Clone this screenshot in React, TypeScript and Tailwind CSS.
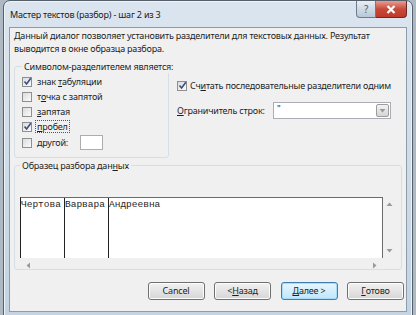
import type { ReactNode } from "react";

const ui = { fontFamily: '"Noto Sans", "Open Sans", sans-serif' };
const mono = { fontFamily: '"Liberation Mono", "DejaVu Sans Mono", monospace' };

const Check = ({ checked }: { checked?: boolean }) => (
    <span className="relative flex h-[10px] w-[10px] shrink-0 items-center justify-center border border-[#8e8f8f] bg-gradient-to-br from-[#dcdcdc] to-[#fbfbfb]">
        {checked && (
            <svg width="9" height="9" viewBox="0 0 9 9" className="absolute">
                <path d="M1.5 4.5 L3.6 7 L7.8 1.2" fill="none" stroke="#3b4f86" strokeWidth="1.6" />
            </svg>
        )}
    </span>
);

const CheckRow = ({ checked, children, focus }: { checked?: boolean; children: ReactNode; focus?: boolean }) => (
    <div className="flex h-[15px] items-center gap-[3px]">
        <Check checked={checked} />
        <span className={focus ? "border border-dotted border-[#555] px-[1px] leading-[11px]" : "px-[2px]"}>{children}</span>
    </div>
);

const Btn = ({ children, primary }: { children: ReactNode; primary?: boolean }) => (
    <div
        className={
            "flex h-[18px] w-[57px] items-center justify-center rounded-[3px] border " +
            (primary
                ? "border-[#3c7fb1] bg-gradient-to-b from-[#eaf6fd] to-[#bee6fd] shadow-[inset_0_0_0_1px_#a6dcf7]"
                : "border-[#707070] bg-gradient-to-b from-[#f2f2f2] to-[#d6d6d6] shadow-[inset_0_0_0_1px_#fcfcfc]")
        }
    >
        {children}
    </div>
);

const Arrow = ({ d }: { d: string }) => (
    <svg width="7" height="7" viewBox="0 0 7 7">
        <path d={d} fill="#9a9a9a" />
    </svg>
);

export default function App() {
    return (
        <div className="h-[315px] w-[416px] overflow-hidden whitespace-nowrap bg-[#aeb9c4] text-[9px] tracking-[-0.2px] text-[#1e1e1e]" style={ui}>
            <div className="ml-[3px] flex h-[318px] w-[410px] flex-col rounded-t-[7px] border border-[#55606b] bg-gradient-to-b from-[#dbe5ef] to-[#c3d3e3] px-[5px] pb-[5px] shadow-[inset_0_0_0_1px_#eef3f8]">
                <div className="flex h-[26px] items-start justify-between">
                    <span className="pl-[1px] pt-[7px] text-[#1b1b1b]">Мастер текстов (разбор) - шаг 2 из 3</span>
                    <div className="flex">
                        <div className="flex h-[17px] w-[20px] items-center justify-center rounded-bl-[4px] border border-t-0 border-[#6d7c8c] bg-gradient-to-b from-[#e8eef5] to-[#b9c7d6] text-[10px] text-[#4c5967]">
                            ?
                        </div>
                        <div className="flex h-[17px] w-[31px] items-center justify-center rounded-br-[4px] border border-l-0 border-t-0 border-[#6a2a24] bg-gradient-to-b from-[#e89c8f] via-[#c74a3a] to-[#c0392b]">
                            <svg width="10" height="9" viewBox="0 0 10 9">
                                <path d="M1.5 1 L8.5 8 M8.5 1 L1.5 8" stroke="#fff" strokeWidth="2.2" />
                            </svg>
                        </div>
                    </div>
                </div>
                <div className="flex flex-1 flex-col border border-[#8d9cab] bg-[#f0f0f0]">
                    <p className="pl-[4px] pt-[1px] leading-[13px]">
                        Данный диалог позволяет установить разделители для текстовых данных. Результат
                        <br />
                        выводится в окне образца разбора.
                    </p>
                    <div className="mt-[5px] flex">
                        <fieldset className="ml-[4px] h-[98px] w-[155px] min-w-0 shrink-0 rounded-[3px] border border-[#d5dfe5] pl-[7px] pt-[1px]">
                            <legend className="px-[2px] leading-[13px]">Символом-разделителем является:</legend>
                            <CheckRow checked>
                                знак <u>т</u>абуляции
                            </CheckRow>
                            <CheckRow>
                                т<u>о</u>чка с запятой
                            </CheckRow>
                            <CheckRow>
                                <u>з</u>апятая
                            </CheckRow>
                            <CheckRow checked focus>
                                <u>п</u>робел
                            </CheckRow>
                            <div className="flex h-[17px] items-center gap-[3px]">
                                <Check />
                                <span className="px-[2px]">
                                    <u>д</u>ругой:
                                </span>
                                <span className="ml-[7px] h-[15px] w-[23px] border border-[#abadb3] bg-white" />
                            </div>
                        </fieldset>
                        <div className="ml-[8px] flex flex-col pt-[19px]">
                            <div className="flex h-[13px] items-center gap-[3px]">
                                <Check checked />
                                <span>
                                    Сч<u>и</u>тать последовательные разделители одним
                                </span>
                            </div>
                            <div className="mt-[10px] flex items-center">
                                <span className="w-[96px]">
                                    <u>О</u>граничитель строк:
                                </span>
                                <div className="flex h-[17px] w-[118px] border border-[#abadb3] bg-white">
                                    <span className="flex-1 pl-[3px] leading-[11px]">"</span>
                                    <div className="m-[1px] flex w-[13px] items-center justify-center rounded-[2px] border border-[#9c9c9c] bg-gradient-to-b from-[#f3f3f3] to-[#d5d5d5]">
                                        <Arrow d="M0.5 2 L6.5 2 L3.5 5.5 Z" />
                                    </div>
                                </div>
                            </div>
                        </div>
                    </div>
                    <fieldset className="ml-[4px] mt-[1px] h-[111px] w-[388px] min-w-0 rounded-[3px] border border-[#d5dfe5] pl-[5px] pt-[25px]">
                        <legend className="px-[2px] leading-[13px]">
                            Образец разбора дан<u>н</u>ых
                        </legend>
                        <div className="flex w-[376px] flex-col">
                            <div className="flex h-[61px]">
                                <div className="flex flex-1 border-l border-r border-t border-[#6b6b6b] border-l-[#222] bg-white text-[9.5px] leading-[14px] tracking-normal" style={mono}>
                                    <span className="w-[44px] border-r border-[#222]">Чертова</span>
                                    <span className="w-[44px] border-r border-[#222]">Варвара</span>
                                    <span>Андреевна</span>
                                </div>
                                <div className="flex w-[13px] flex-col items-center justify-between py-[4px]">
                                    <Arrow d="M0.5 5 L6.5 5 L3.5 1.5 Z" />
                                    <Arrow d="M0.5 2 L6.5 2 L3.5 5.5 Z" />
                                </div>
                            </div>
                            <div className="flex h-[14px] w-[363px] items-center justify-between px-[5px]">
                                <Arrow d="M5 0.5 L5 6.5 L1.5 3.5 Z" />
                                <Arrow d="M2 0.5 L2 6.5 L5.5 3.5 Z" />
                            </div>
                        </div>
                    </fieldset>
                    <div className="mt-[12px] flex justify-end gap-[9.5px] pr-[2px]">
                        <Btn>Cancel</Btn>
                        <Btn>
                            {"< "}
                            <u>Н</u>азад
                        </Btn>
                        <Btn primary>
                            <u>Д</u>алее{" >"}
                        </Btn>
                        <Btn>
                            <u>Г</u>отово
                        </Btn>
                    </div>
                </div>
            </div>
        </div>
    );
}
